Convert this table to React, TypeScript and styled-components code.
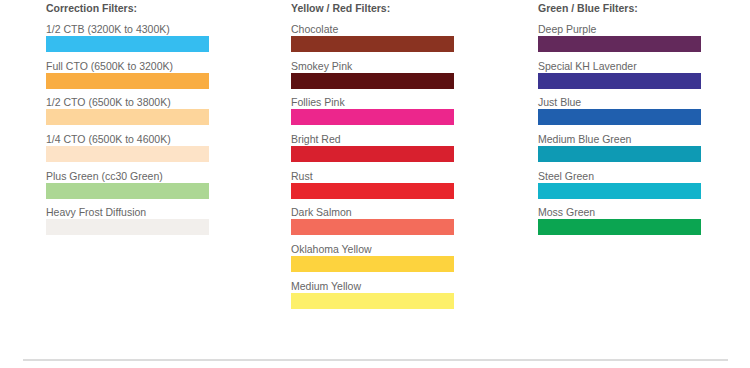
import styled, { createGlobalStyle } from "styled-components";

const GlobalStyle = createGlobalStyle`
  html, body {
    margin: 0;
    padding: 0;
    background: #fff;
  }
`;

const Page = styled.div`
  font-family: "Liberation Sans", Arial, sans-serif;
  width: 750px;
  height: 368px;
  padding-top: 2px;
  box-sizing: border-box;
  overflow: hidden;
`;

const Columns = styled.div`
  display: grid;
  grid-template-columns: 245px 247px 1fr;
  padding-left: 46px;
`;

const Column = styled.section`
  display: flex;
  flex-direction: column;
`;

const Heading = styled.h3`
  margin: 0 0 9px;
  font-size: 10.5px;
  line-height: 12px;
  font-weight: 700;
  color: #555;
`;

const Filter = styled.div`
  margin-bottom: 7.67px;
`;

const Label = styled.div`
  font-size: 10.5px;
  line-height: 12px;
  color: #666;
  margin-bottom: 1px;
  white-space: nowrap;
`;

const Swatch = styled.div<{ $color: string }>`
  width: 163px;
  height: 16px;
  background: ${(p) => p.$color};
`;

const Divider = styled.hr`
  margin: 42.5px 22px 0 23px;
  border: none;
  border-top: 2px solid #dcdcdc;
  height: 0;
`;

type Group = { title: string; items: [string, string][] };

const groups: Group[] = [
  {
    title: "Correction Filters:",
    items: [
      ["1/2 CTB (3200K to 4300K)", "#35bdf0"],
      ["Full CTO (6500K to 3200K)", "#f9ad42"],
      ["1/2 CTO (6500K to 3800K)", "#fdd59b"],
      ["1/4 CTO (6500K to 4600K)", "#fde3c7"],
      ["Plus Green (cc30 Green)", "#acd794"],
      ["Heavy Frost Diffusion", "#f2efec"],
    ],
  },
  {
    title: "Yellow / Red Filters:",
    items: [
      ["Chocolate", "#8a3321"],
      ["Smokey Pink", "#5c1011"],
      ["Follies Pink", "#ec268c"],
      ["Bright Red", "#d8202e"],
      ["Rust", "#e8252c"],
      ["Dark Salmon", "#f36c5b"],
      ["Oklahoma Yellow", "#fdd33e"],
      ["Medium Yellow", "#fdf06a"],
    ],
  },
  {
    title: "Green / Blue Filters:",
    items: [
      ["Deep Purple", "#63295b"],
      ["Special KH Lavender", "#3b3491"],
      ["Just Blue", "#205fae"],
      ["Medium Blue Green", "#0e9ab4"],
      ["Steel Green", "#12b3cb"],
      ["Moss Green", "#0ba551"],
    ],
  },
];

export default function App() {
  return (
    <Page>
      <GlobalStyle />
      <Columns>
        {groups.map((g) => (
          <Column key={g.title}>
            <Heading>{g.title}</Heading>
            {g.items.map(([name, color]) => (
              <Filter key={name}>
                <Label>{name}</Label>
                <Swatch $color={color} />
              </Filter>
            ))}
          </Column>
        ))}
      </Columns>
      <Divider />
    </Page>
  );
}
